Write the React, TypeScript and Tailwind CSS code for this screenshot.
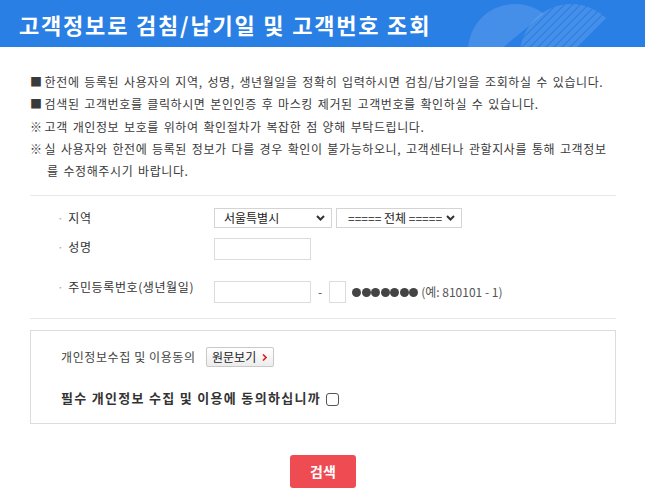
import React from 'react';

const notes = [
    { mark: '■', text: '한전에 등록된 사용자의 지역, 성명, 생년월일을 정확히 입력하시면 검침/납기일을 조회하실 수 있습니다.' },
    { mark: '■', text: '검색된 고객번호를 클릭하시면 본인인증 후 마스킹 제거된 고객번호를 확인하실 수 있습니다.' },
    { mark: '※', text: '고객 개인정보 보호를 위하여 확인절차가 복잡한 점 양해 부탁드립니다.' },
    { mark: '※', text: '실 사용자와 한전에 등록된 정보가 다를 경우 확인이 불가능하오니, 고객센터나 관할지사를 통해 고객정보' },
];

const Chevron: React.FC = () => (
    <svg width="9" height="6" viewBox="0 0 9 6" className="shrink-0">
        <path d="M1 1 L4.5 4.5 L8 1" fill="none" stroke="#333" strokeWidth="2" />
    </svg>
);

const FakeSelect: React.FC<{ label: string; width: string; pad: string }> = ({ label, width, pad }) => (
    <div className={`flex h-[20px] items-center justify-between border border-[#d4d4d4] bg-white pr-[6px] text-[12px] text-[#222] ${width} ${pad}`}>
        <span className="whitespace-pre leading-none">{label}</span>
        <Chevron />
    </div>
);

// decorative circles on the right of the title bar
const HeaderArt: React.FC = () => (
    <svg width="170" height="47" viewBox="460 0 170 47" className="absolute right-[15px] top-0">
        <defs>
            <clipPath id="solid">
                <polygon points="440,0 560,0 500,50 440,50" />
            </clipPath>
            <clipPath id="ring">
                <circle cx="571" cy="55" r="51" />
            </clipPath>
        </defs>
        <circle cx="515" cy="51" r="47" fill="#ffffff" fillOpacity="0.13" clipPath="url(#solid)" />
        <g clipPath="url(#ring)" stroke="#ffffff" strokeOpacity="0.13" strokeWidth="4.5">
            {[0, 8, 16, 24, 32, 40, 48, 56, 64].map((o) => (
                <line key={o} x1={562 + o} y1={-5} x2={502 + o} y2={55} />
            ))}
        </g>
    </svg>
);

export default function App() {
    return (
        <div className="w-[645px] min-h-[502px] bg-white font-['Noto_Sans_CJK_KR','Noto_Sans',sans-serif] text-[#333]">
            {/* Title bar */}
            <div className="relative flex h-[47px] items-center overflow-hidden bg-[#2a7fe5] pl-[19px]">
                <h1 className="relative z-10 text-[22px] font-bold leading-none tracking-[1.8px] text-white">
                    고객정보로 검침/납기일 및 고객번호 조회
                </h1>
                <HeaderArt />
            </div>

            <div className="px-[30px] pr-[29px] tracking-[0.6px]">
                {/* Notices */}
                <div className="mt-[24px] text-[12px] leading-[22.3px] text-[#3a3a3a] [word-spacing:1.5px]">
                    {notes.map((n, i) => (
                        <p key={i} className="whitespace-nowrap">
                            <span className="mr-[2px]">{n.mark}</span>
                            {n.text}
                        </p>
                    ))}
                    <p className="whitespace-nowrap pl-[17px]">를 수정해주시기 바랍니다.</p>
                </div>

                {/* Form */}
                <div className="mt-[13px] border-t border-[#e8e8e8] pt-[12px] pb-[15px] text-[12px]">
                    <div className="flex items-center">
                        <div className="flex w-[184px] items-center pl-[27px] text-[#333]">
                            <span className="mr-[4px] text-[#aaa]">·</span>지역
                        </div>
                        <div className="flex gap-[4px] tracking-normal">
                            <FakeSelect label="서울특별시" width="w-[118px]" pad="pl-[9px]" />
                            <FakeSelect label="===== 전체 =====" width="w-[126px]" pad="pl-[11px]" />
                        </div>
                    </div>

                    <div className="mt-[10px] flex items-start">
                        <div className="flex w-[184px] items-center pl-[27px] leading-[18px]">
                            <span className="mr-[4px] text-[#aaa]">·</span>성명
                        </div>
                        <div className="h-[22px] w-[97px] border border-[#dcdcdc]" />
                    </div>

                    <div className="mt-[21px] flex items-start">
                        <div className="flex w-[184px] items-center pl-[27px] leading-[12px]">
                            <span className="mr-[4px] text-[#aaa]">·</span>주민등록번호(생년월일)
                        </div>
                        <div className="flex items-center tracking-normal">
                            <div className="h-[22px] w-[97px] border border-[#dcdcdc]" />
                            <span className="mx-[7px] text-[#555]">-</span>
                            <div className="h-[22px] w-[17px] border border-[#dcdcdc]" />
                            <div className="ml-[6px] flex gap-[0.5px]">
                                {[0, 1, 2, 3, 4, 5, 6].map((d) => (
                                    <span key={d} className="h-[9px] w-[9px] rounded-full bg-[#444]" />
                                ))}
                            </div>
                            <span className="ml-[3px] text-[#555]">(예: 810101 - 1)</span>
                        </div>
                    </div>
                </div>

                {/* Consent box */}
                <div className="border-t border-[#e8e8e8] pt-[11px]">
                    <div className="h-[94px] border border-[#dcdcdc] pl-[30px] pt-[16px]">
                        <div className="flex items-center text-[12px] text-[#444]">
                            <span>개인정보수집 및 이용동의</span>
                            <button className="ml-[10px] flex h-[20px] w-[68px] items-center justify-center gap-[6px] rounded-[2px] border border-[#c9c9c9] bg-gradient-to-b from-white to-[#ececec] text-[12px] tracking-normal text-[#222]">
                                원문보기
                                <svg width="5" height="7" viewBox="0 0 5 7">
                                    <path d="M1 0.5 L4 3.5 L1 6.5" fill="none" stroke="#e02020" strokeWidth="1.6" />
                                </svg>
                            </button>
                        </div>
                        <div className="mt-[21px] flex items-center">
                            <span className="text-[13px] font-bold tracking-[1.3px] text-[#333]">
                                필수 개인정보 수집 및 이용에 동의하십니까
                            </span>
                            <span className="ml-[5px] mt-[3px] h-[13px] w-[13px] rounded-[3px] border border-[#555] bg-white" />
                        </div>
                    </div>
                </div>

                {/* Submit */}
                <div className="flex justify-center pt-[31px] pb-[15px]">
                    <button className="h-[33px] w-[66px] rounded-[3px] bg-[#ef4b53] text-[14px] font-bold tracking-normal text-white">
                        검색
                    </button>
                </div>
            </div>
        </div>
    );
}
